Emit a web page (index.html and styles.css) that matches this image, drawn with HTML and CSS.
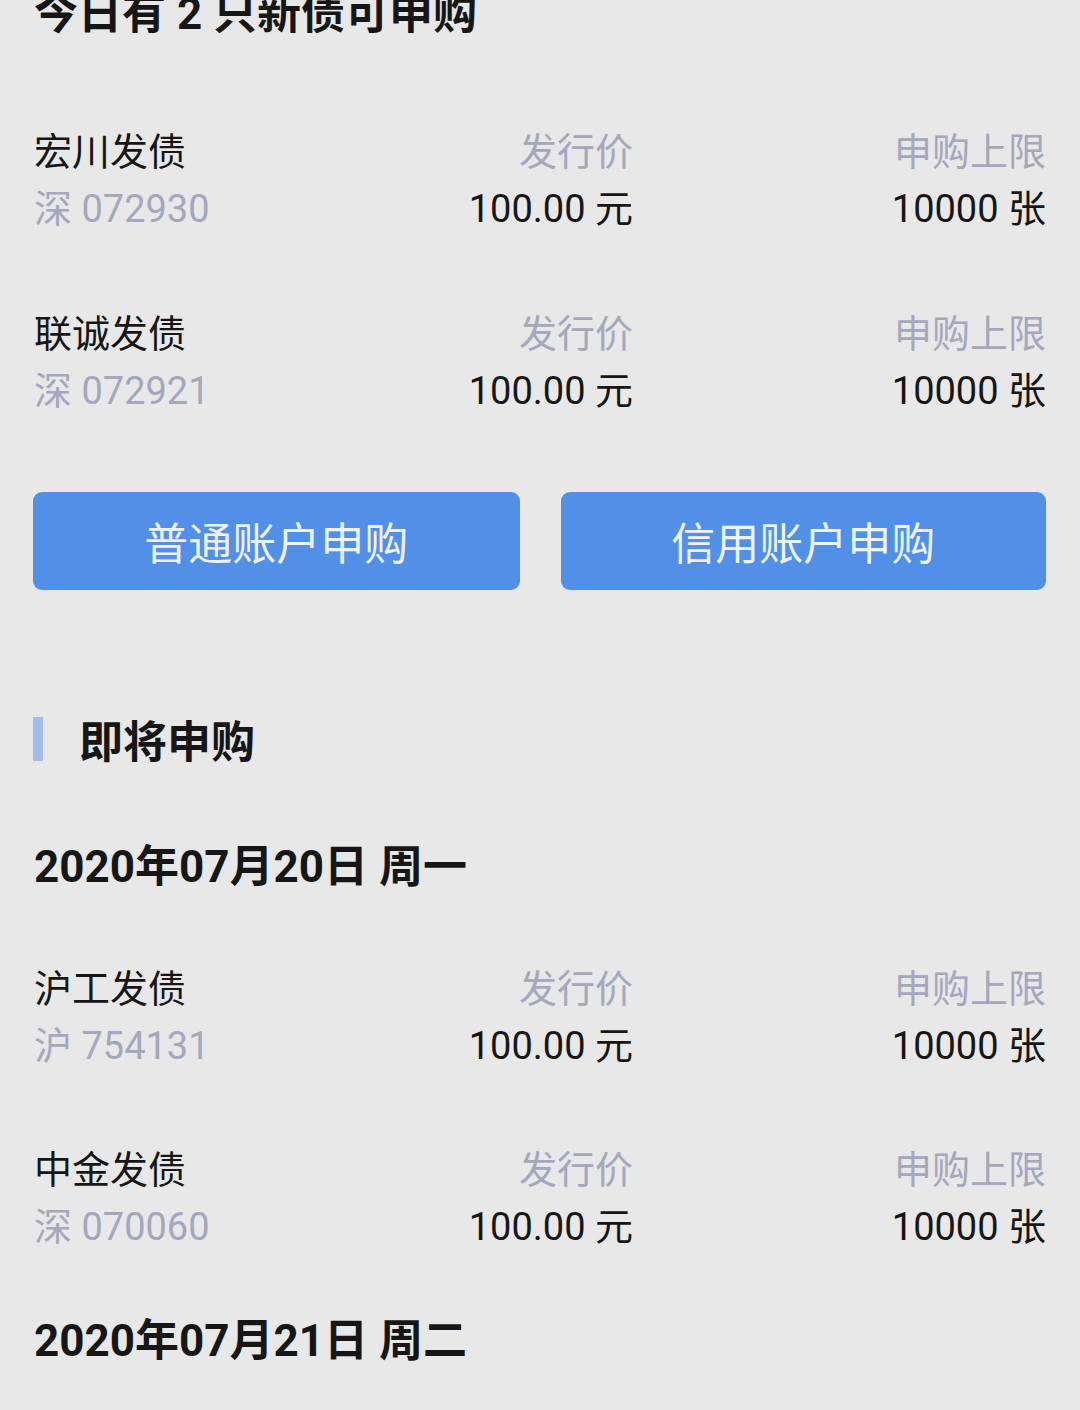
FILE: index.html
```html
<!DOCTYPE html>
<html lang="zh-CN">
<head>
<meta charset="utf-8">
<title>新债申购</title>
<link rel="stylesheet" href="styles.css">
</head>
<body>
<main class="page">
  <h1 class="page-title">今日有 2 只新债可申购</h1>

  <section class="bond-list today">
    <div class="bond-row">
      <div class="bond-name">
        <div class="name">宏川发债</div>
        <div class="code">深 072930</div>
      </div>
      <div class="bond-col">
        <div class="label">发行价</div>
        <div class="value">100.00 元</div>
      </div>
      <div class="bond-col">
        <div class="label">申购上限</div>
        <div class="value">10000 张</div>
      </div>
    </div>
    <div class="bond-row">
      <div class="bond-name">
        <div class="name">联诚发债</div>
        <div class="code">深 072921</div>
      </div>
      <div class="bond-col">
        <div class="label">发行价</div>
        <div class="value">100.00 元</div>
      </div>
      <div class="bond-col">
        <div class="label">申购上限</div>
        <div class="value">10000 张</div>
      </div>
    </div>
  </section>

  <div class="actions">
    <button class="btn">普通账户申购</button>
    <button class="btn">信用账户申购</button>
  </div>

  <h2 class="section-title"><span class="bar"></span><span class="section-text">即将申购</span></h2>

  <h3 class="date-title first">2020年07月20日 周一</h3>
  <section class="bond-list">
    <div class="bond-row">
      <div class="bond-name">
        <div class="name">沪工发债</div>
        <div class="code">沪 754131</div>
      </div>
      <div class="bond-col">
        <div class="label">发行价</div>
        <div class="value">100.00 元</div>
      </div>
      <div class="bond-col">
        <div class="label">申购上限</div>
        <div class="value">10000 张</div>
      </div>
    </div>
    <div class="bond-row">
      <div class="bond-name">
        <div class="name">中金发债</div>
        <div class="code">深 070060</div>
      </div>
      <div class="bond-col">
        <div class="label">发行价</div>
        <div class="value">100.00 元</div>
      </div>
      <div class="bond-col">
        <div class="label">申购上限</div>
        <div class="value">10000 张</div>
      </div>
    </div>
  </section>

  <h3 class="date-title second">2020年07月21日 周二</h3>
</main>
</body>
</html>
```

FILE: styles.css
```css
* { box-sizing: border-box; }

html, body {
  margin: 0;
  padding: 0;
  background: #e8e8e8;
}

body {
  font-family: Roboto, "Noto Sans CJK SC", "Noto Sans", sans-serif;
  color: #161616;
  overflow: hidden;
  height: 1410px;
}

.page {
  padding: 0 34px;
}

.page-title {
  margin: -16px 0 0;
  font-size: 44px;
  line-height: 60px;
  font-weight: 700;
}

.bond-list {
  display: flex;
  flex-direction: column;
  gap: 67.5px;
}

.bond-list.today {
  margin-top: 80px;
}

.bond-row {
  display: grid;
  grid-template-columns: 1fr auto 413px;
  font-size: 38px;
  line-height: 57px;
}

.bond-col {
  text-align: right;
  white-space: nowrap;
}

.name, .value {
  color: #161616;
}

.code, .label {
  color: #a4a7bd;
}

.actions {
  display: grid;
  grid-template-columns: 1fr 1fr;
  gap: 41px;
  margin-top: 72px;
}

.btn {
  height: 98px;
  border: none;
  border-radius: 9px;
  background: #5290e8;
  color: #eef2f9;
  font-family: Roboto, "Noto Sans CJK SC", sans-serif;
  font-size: 44px;
  font-weight: 400;
  padding: 0;
  margin: 0;
  cursor: pointer;
}

.actions .btn:first-child {
  margin-left: -1px;
}

.section-title {
  display: flex;
  align-items: center;
  gap: 36px;
  margin: 121px 0 0 -1px;
  font-size: 44px;
  line-height: 60px;
  font-weight: 700;
}

.section-title .bar {
  width: 10px;
  height: 44px;
  background: #a4bdea;
  margin-top: -3px;
}

.section-text {
  position: relative;
  top: 2px;
}

.date-title {
  margin: 0;
  font-size: 44px;
  line-height: 60px;
  font-weight: 700;
}

.date-title.first {
  margin-top: 66px;
  margin-bottom: 64px;
}

.date-title.second {
  margin-top: 55px;
}
```
